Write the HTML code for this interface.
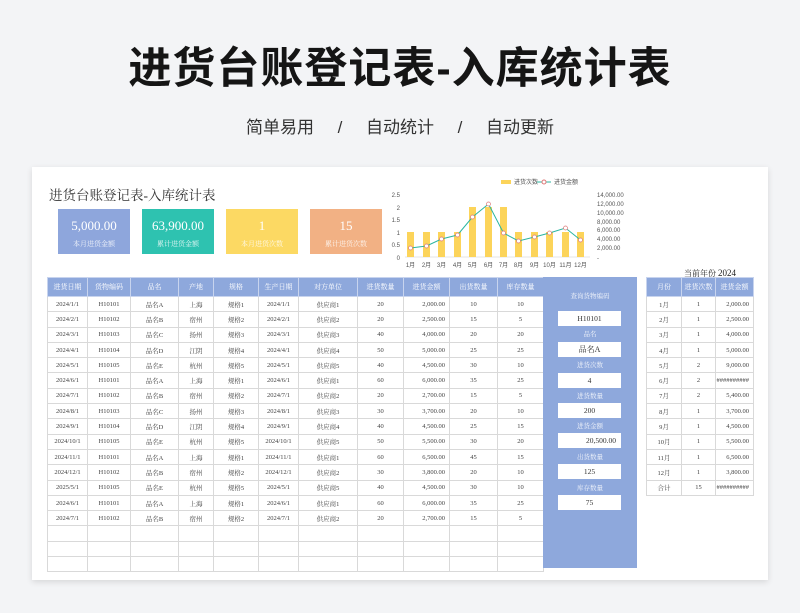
<!DOCTYPE html>
<html><head><meta charset="utf-8">
<style>
*{margin:0;padding:0;box-sizing:border-box}
body{width:800px;height:613px;overflow:hidden;background:#f3f4f6;font-family:"Liberation Serif","Noto Serif CJK SC",serif;position:relative}
.h1{position:absolute;top:34px;left:0;width:800px;text-align:center;font:bold 43px "Liberation Sans","Noto Sans CJK SC",sans-serif;color:#151515;letter-spacing:1px}
.h2{position:absolute;top:113px;left:0;width:800px;text-align:center;font:17px "Liberation Sans","Noto Sans CJK SC",sans-serif;color:#333;word-spacing:0}
.card{position:absolute;left:32px;top:167px;width:736px;height:413px;background:#fff;box-shadow:0 2px 6px rgba(0,0,0,.12)}
.ab{position:absolute}
.ttl{left:49px;top:184px;font-size:13.5px;color:#333}
.kpi{position:absolute;top:209px;width:72px;height:45px;color:#fff;text-align:center}
.kpi b{display:block;font-weight:normal;font-size:13px;margin-top:9px}
.kpi i{display:block;font-style:normal;font-size:7px;margin-top:5px;opacity:.85}
table{border-collapse:collapse;position:absolute;table-layout:fixed}
td{border:1px solid #d9d9d9;height:15.3px;font-size:6.5px;color:#444;text-align:center;white-space:nowrap;overflow:hidden;padding:0}
tr.hd td{background:#8ea8dc;color:#fff;height:19px;border-color:#c8d4ee;font-size:7px}
td.r{text-align:right;padding-right:4px}
.panel{position:absolute;left:543px;top:277px;width:94px;height:291px;background:#8ea8dc}
.lab{position:absolute;left:0;width:94px;text-align:center;color:#fff;font-size:6.5px;opacity:.9}
.box{position:absolute;left:15px;width:63px;height:15px;background:#fff;text-align:center;font-size:7.5px;line-height:15px;color:#333}
</style></head><body>
<div class="h1">进货台账登记表-入库统计表</div>
<div class="h2">简单易用&nbsp;&nbsp;&nbsp;&nbsp;&nbsp;/&nbsp;&nbsp;&nbsp;&nbsp;&nbsp;自动统计&nbsp;&nbsp;&nbsp;&nbsp;&nbsp;/&nbsp;&nbsp;&nbsp;&nbsp;&nbsp;自动更新</div>
<div class="card"></div>
<div class="ab ttl">进货台账登记表-入库统计表</div>
<div class="kpi" style="left:58px;background:#8ea6dc"><b>5,000.00</b><i>本月进货金额</i></div>
<div class="kpi" style="left:142px;background:#2ec2b0"><b>63,900.00</b><i>累计进货金额</i></div>
<div class="kpi" style="left:226px;background:#fcd963"><b>1</b><i>本月进货次数</i></div>
<div class="kpi" style="left:310px;background:#f2b184"><b>15</b><i>累计进货次数</i></div>

<svg class="ab" style="left:370px;top:170px" width="270" height="105" font-family="Liberation Sans" font-size="6" fill="#555">
<rect x="131" y="10" width="10" height="4" fill="#fcd45a"/><text x="144" y="14">进货次数</text>
<line x1="167" y1="12" x2="181" y2="12" stroke="#2bb5a0"/><circle cx="174" cy="12" r="2" fill="#fff" stroke="#d77"/><text x="184" y="14">进货金额</text>
<g text-anchor="end"><text x="30" y="27">2.5</text><text x="30" y="40">2</text><text x="30" y="52">1.5</text><text x="30" y="65">1</text><text x="30" y="77">0.5</text><text x="30" y="90">0</text></g>
<g><text x="227" y="27">14,000.00</text><text x="227" y="36">12,000.00</text><text x="227" y="45">10,000.00</text><text x="227" y="54">8,000.00</text><text x="227" y="62">6,000.00</text><text x="227" y="71">4,000.00</text><text x="227" y="80">2,000.00</text><text x="227" y="90">-</text></g>
<line x1="35" y1="87" x2="220" y2="87" stroke="#ccc" stroke-width=".5"/>
<g fill="#fcd45a">
<rect x="37" y="62" width="7" height="25"/><rect x="53" y="62" width="7" height="25"/><rect x="68" y="62" width="7" height="25"/><rect x="84" y="62" width="7" height="25"/><rect x="99" y="37" width="7" height="50"/><rect x="115" y="37" width="7" height="50"/><rect x="130" y="37" width="7" height="50"/><rect x="145" y="62" width="7" height="25"/><rect x="161" y="62" width="7" height="25"/><rect x="176" y="62" width="7" height="25"/><rect x="192" y="62" width="7" height="25"/><rect x="207" y="62" width="7" height="25"/></g>
<polyline fill="none" stroke="#2bb5a0" stroke-width="1" points="40.5,78 56.5,76 71.5,69 87.5,65 102.5,47 118.5,34 133.5,63 148.5,71 164.5,67 179.5,63 195.5,58 210.5,70"/>
<g fill="#fff" stroke="#d77" stroke-width=".7">
<circle cx="40.5" cy="78" r="2"/><circle cx="56.5" cy="76" r="2"/><circle cx="71.5" cy="69" r="2"/><circle cx="87.5" cy="65" r="2"/><circle cx="102.5" cy="47" r="2"/><circle cx="118.5" cy="34" r="2"/><circle cx="133.5" cy="63" r="2"/><circle cx="148.5" cy="71" r="2"/><circle cx="164.5" cy="67" r="2"/><circle cx="179.5" cy="63" r="2"/><circle cx="195.5" cy="58" r="2"/><circle cx="210.5" cy="70" r="2"/></g>
<g text-anchor="middle"><text x="40.5" y="97">1月</text><text x="56.5" y="97">2月</text><text x="71.5" y="97">3月</text><text x="87.5" y="97">4月</text><text x="102.5" y="97">5月</text><text x="118.5" y="97">6月</text><text x="133.5" y="97">7月</text><text x="148.5" y="97">8月</text><text x="164.5" y="97">9月</text><text x="179.5" y="97">10月</text><text x="195.5" y="97">11月</text><text x="210.5" y="97">12月</text></g>
</svg>

<table style="left:47px;top:277px;width:496px">
<colgroup><col style="width:40px"><col style="width:43px"><col style="width:48px"><col style="width:35px"><col style="width:45px"><col style="width:40px"><col style="width:59px"><col style="width:46px"><col style="width:46px"><col style="width:48px"><col style="width:46px"></colgroup>
<tr class="hd"><td>进货日期</td><td>货物编码</td><td>品名</td><td>产地</td><td>规格</td><td>生产日期</td><td>对方单位</td><td>进货数量</td><td>进货金额</td><td>出货数量</td><td>库存数量</td></tr>
<tr><td>2024/1/1</td><td>H10101</td><td>品名A</td><td>上海</td><td>规格1</td><td>2024/1/1</td><td>供应商1</td><td>20</td><td class="r">2,000.00</td><td>10</td><td>10</td></tr>
<tr><td>2024/2/1</td><td>H10102</td><td>品名B</td><td>宿州</td><td>规格2</td><td>2024/2/1</td><td>供应商2</td><td>20</td><td class="r">2,500.00</td><td>15</td><td>5</td></tr>
<tr><td>2024/3/1</td><td>H10103</td><td>品名C</td><td>扬州</td><td>规格3</td><td>2024/3/1</td><td>供应商3</td><td>40</td><td class="r">4,000.00</td><td>20</td><td>20</td></tr>
<tr><td>2024/4/1</td><td>H10104</td><td>品名D</td><td>江阴</td><td>规格4</td><td>2024/4/1</td><td>供应商4</td><td>50</td><td class="r">5,000.00</td><td>25</td><td>25</td></tr>
<tr><td>2024/5/1</td><td>H10105</td><td>品名E</td><td>杭州</td><td>规格5</td><td>2024/5/1</td><td>供应商5</td><td>40</td><td class="r">4,500.00</td><td>30</td><td>10</td></tr>
<tr><td>2024/6/1</td><td>H10101</td><td>品名A</td><td>上海</td><td>规格1</td><td>2024/6/1</td><td>供应商1</td><td>60</td><td class="r">6,000.00</td><td>35</td><td>25</td></tr>
<tr><td>2024/7/1</td><td>H10102</td><td>品名B</td><td>宿州</td><td>规格2</td><td>2024/7/1</td><td>供应商2</td><td>20</td><td class="r">2,700.00</td><td>15</td><td>5</td></tr>
<tr><td>2024/8/1</td><td>H10103</td><td>品名C</td><td>扬州</td><td>规格3</td><td>2024/8/1</td><td>供应商3</td><td>30</td><td class="r">3,700.00</td><td>20</td><td>10</td></tr>
<tr><td>2024/9/1</td><td>H10104</td><td>品名D</td><td>江阴</td><td>规格4</td><td>2024/9/1</td><td>供应商4</td><td>40</td><td class="r">4,500.00</td><td>25</td><td>15</td></tr>
<tr><td>2024/10/1</td><td>H10105</td><td>品名E</td><td>杭州</td><td>规格5</td><td>2024/10/1</td><td>供应商5</td><td>50</td><td class="r">5,500.00</td><td>30</td><td>20</td></tr>
<tr><td>2024/11/1</td><td>H10101</td><td>品名A</td><td>上海</td><td>规格1</td><td>2024/11/1</td><td>供应商1</td><td>60</td><td class="r">6,500.00</td><td>45</td><td>15</td></tr>
<tr><td>2024/12/1</td><td>H10102</td><td>品名B</td><td>宿州</td><td>规格2</td><td>2024/12/1</td><td>供应商2</td><td>30</td><td class="r">3,800.00</td><td>20</td><td>10</td></tr>
<tr><td>2025/5/1</td><td>H10105</td><td>品名E</td><td>杭州</td><td>规格5</td><td>2024/5/1</td><td>供应商5</td><td>40</td><td class="r">4,500.00</td><td>30</td><td>10</td></tr>
<tr><td>2024/6/1</td><td>H10101</td><td>品名A</td><td>上海</td><td>规格1</td><td>2024/6/1</td><td>供应商1</td><td>60</td><td class="r">6,000.00</td><td>35</td><td>25</td></tr>
<tr><td>2024/7/1</td><td>H10102</td><td>品名B</td><td>宿州</td><td>规格2</td><td>2024/7/1</td><td>供应商2</td><td>20</td><td class="r">2,700.00</td><td>15</td><td>5</td></tr>
<tr><td></td><td></td><td></td><td></td><td></td><td></td><td></td><td></td><td></td><td></td><td></td></tr>
<tr><td></td><td></td><td></td><td></td><td></td><td></td><td></td><td></td><td></td><td></td><td></td></tr>
<tr><td></td><td></td><td></td><td></td><td></td><td></td><td></td><td></td><td></td><td></td><td></td></tr>
</table>

<div class="panel">
<div class="lab" style="top:14px">查询货物编码</div>
<div class="box" style="top:34px">H10101</div>
<div class="lab" style="top:52px">品名</div>
<div class="box" style="top:65px;font-size:8px">品名A</div>
<div class="lab" style="top:83px">进货次数</div>
<div class="box" style="top:96px">4</div>
<div class="lab" style="top:114px">进货数量</div>
<div class="box" style="top:126px">200</div>
<div class="lab" style="top:144px">进货金额</div>
<div class="box" style="top:156px;text-align:right;padding-right:5px">20,500.00</div>
<div class="lab" style="top:175px">出货数量</div>
<div class="box" style="top:187px">125</div>
<div class="lab" style="top:206px">库存数量</div>
<div class="box" style="top:218px">75</div>
</div>

<div class="ab" style="left:684px;top:268px;font-size:8px;color:#222">当前年份 <span style="font-size:9px">2024</span></div>
<table style="left:646px;top:277px;width:107px">
<colgroup><col style="width:35px"><col style="width:34px"><col style="width:38px"></colgroup>
<tr class="hd"><td>月份</td><td>进货次数</td><td>进货金额</td></tr>
<tr><td>1月</td><td>1</td><td class="r">2,000.00</td></tr>
<tr><td>2月</td><td>1</td><td class="r">2,500.00</td></tr>
<tr><td>3月</td><td>1</td><td class="r">4,000.00</td></tr>
<tr><td>4月</td><td>1</td><td class="r">5,000.00</td></tr>
<tr><td>5月</td><td>2</td><td class="r">9,000.00</td></tr>
<tr><td>6月</td><td>2</td><td class="r">##########</td></tr>
<tr><td>7月</td><td>2</td><td class="r">5,400.00</td></tr>
<tr><td>8月</td><td>1</td><td class="r">3,700.00</td></tr>
<tr><td>9月</td><td>1</td><td class="r">4,500.00</td></tr>
<tr><td>10月</td><td>1</td><td class="r">5,500.00</td></tr>
<tr><td>11月</td><td>1</td><td class="r">6,500.00</td></tr>
<tr><td>12月</td><td>1</td><td class="r">3,800.00</td></tr>
<tr><td>合计</td><td>15</td><td class="r">##########</td></tr>
</table>
</body></html>
